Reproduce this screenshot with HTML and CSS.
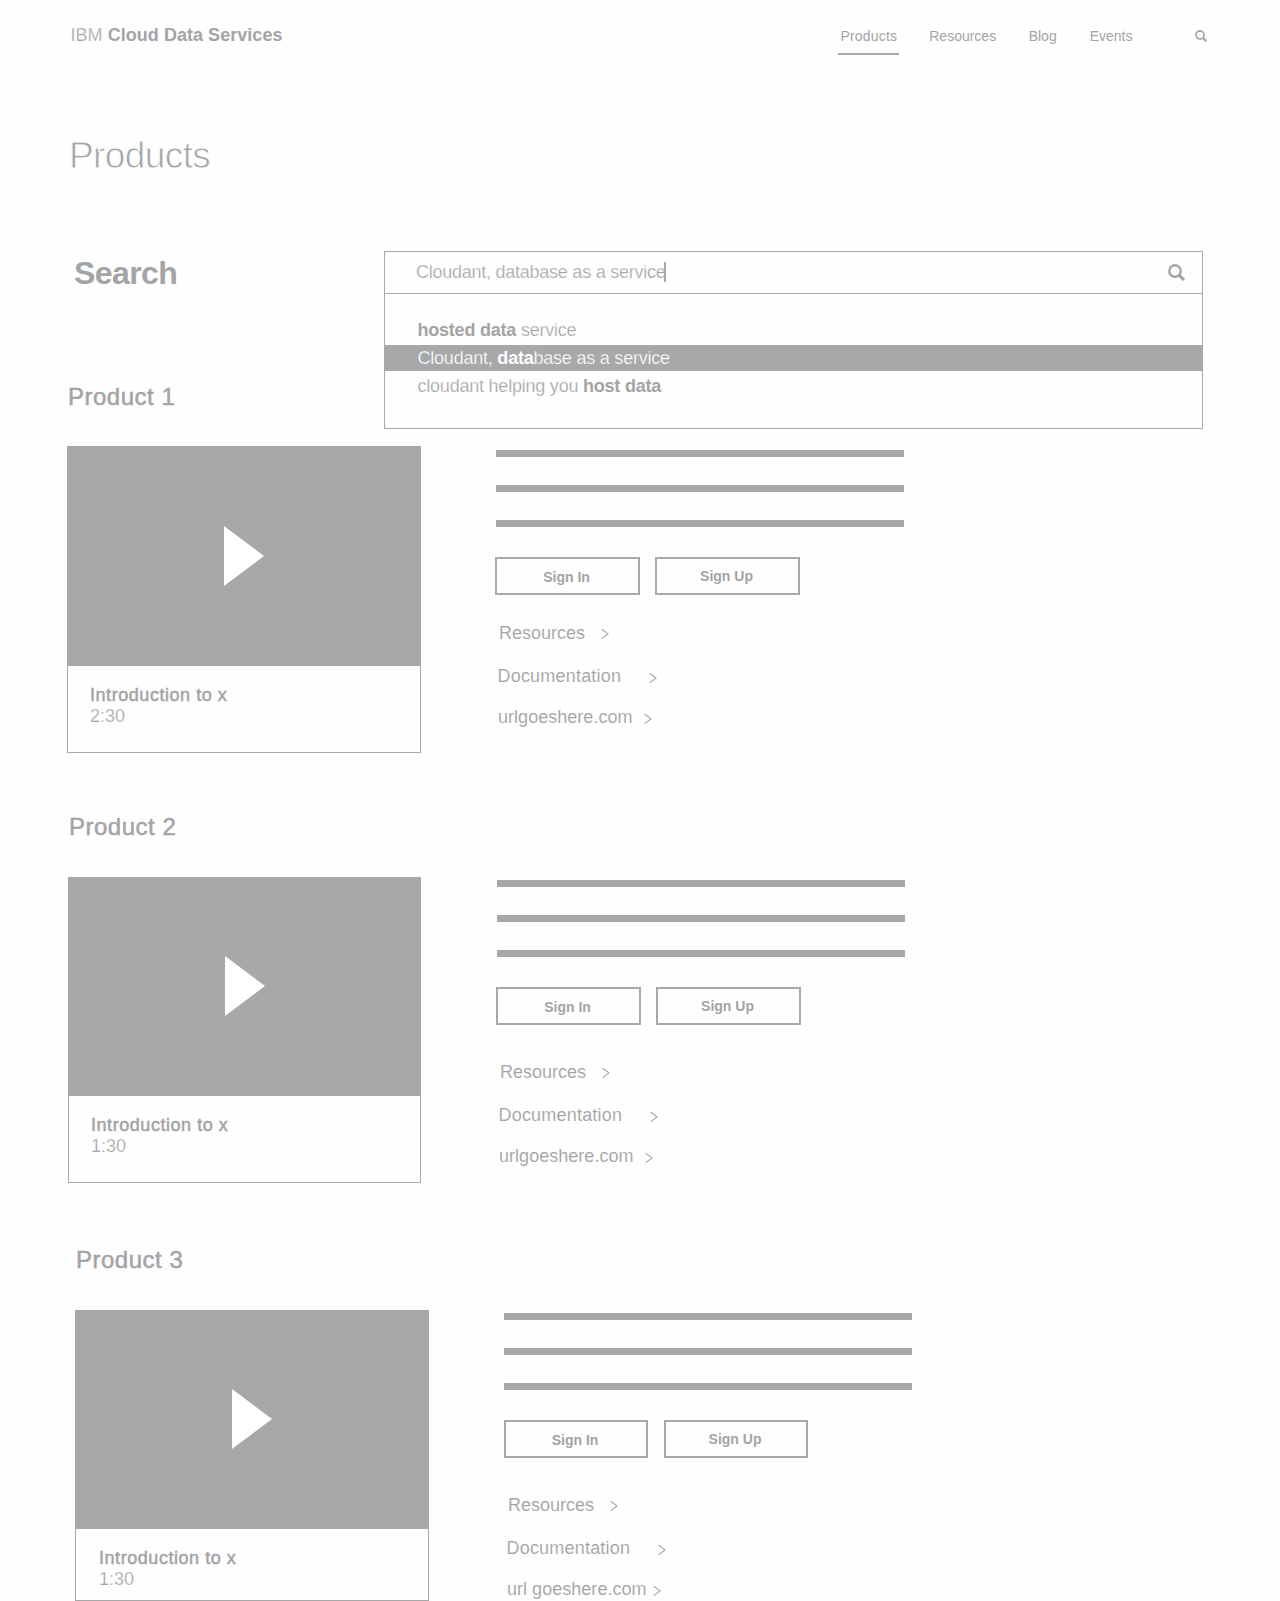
FILE: index.html
```html
<!DOCTYPE html>
<html lang="en">
<head>
<meta charset="utf-8">
<title>IBM Cloud Data Services - Products</title>
<link rel="stylesheet" href="styles.css">
</head>
<body>
<svg class="defs" width="0" height="0">
  <symbol id="search" viewBox="0 0 16 16"><circle cx="6.6" cy="6.6" r="5.4" fill="none" stroke="currentColor" stroke-width="2.2"/><path d="M10.4 10.4L15 15" stroke="currentColor" stroke-width="3" fill="none"/></symbol>
  <symbol id="chevron" viewBox="0 0 8 12"><path d="M.7 1.2L7 5.9L.7 10.6" fill="none" stroke="currentColor" stroke-width="1.1"/></symbol>
  <symbol id="play" viewBox="0 0 40 60"><path d="M0 0L40 30L0 60Z" fill="#fff"/></symbol>
</svg>
<header class="header">
  <div class="brand"><span class="light">IBM</span> <b>Cloud Data Services</b></div>
  <nav class="nav">
    <a class="nav-item active">Products</a>
    <a class="nav-item">Resources</a>
    <a class="nav-item">Blog</a>
    <a class="nav-item">Events</a>
    <svg class="nav-search"><use href="#search"/></svg>
  </nav>
</header>
<h1 class="title">Products</h1>
<section class="search">
  <h2 class="search-title">Search</h2>
  <div class="field">
    <div class="input"><span class="light query">Cloudant, database as a service</span><span class="caret"></span><svg class="field-icon"><use href="#search"/></svg></div>
    <ul class="menu">
      <li><b>hosted data</b> <span class="light">service</span></li>
      <li class="selected"><span class="light">Cloudant, </span><b>data</b><span class="light">base as a service</span></li>
      <li><span class="light">cloudant helping you</span> <b>host data</b></li>
    </ul>
  </div>
</section>
<section class="product first">
  <h2>Product 1</h2>
  <div class="body">
    <article class="card"><div class="video"><svg class="play"><use href="#play"/></svg></div><div class="caption"><h3>Introduction to x</h3><p class="light">2:30</p></div></article>
    <div class="details">
      <div class="lines"><i></i><i></i><i></i></div>
      <div class="buttons"><a class="btn">Sign In</a><a class="btn up">Sign Up</a></div>
      <div class="links">
        <a class="res">Resources<svg><use href="#chevron"/></svg></a>
        <a class="doc">Documentation<svg><use href="#chevron"/></svg></a>
        <a class="url">urlgoeshere.com<svg><use href="#chevron"/></svg></a>
      </div>
    </div>
  </div>
</section>
<section class="product second">
  <h2>Product 2</h2>
  <div class="body">
    <article class="card"><div class="video"><svg class="play"><use href="#play"/></svg></div><div class="caption"><h3>Introduction to x</h3><p class="light">1:30</p></div></article>
    <div class="details">
      <div class="lines"><i></i><i></i><i></i></div>
      <div class="buttons"><a class="btn">Sign In</a><a class="btn up">Sign Up</a></div>
      <div class="links">
        <a class="res">Resources<svg><use href="#chevron"/></svg></a>
        <a class="doc">Documentation<svg><use href="#chevron"/></svg></a>
        <a class="url">urlgoeshere.com<svg><use href="#chevron"/></svg></a>
      </div>
    </div>
  </div>
</section>
<section class="product third">
  <h2>Product 3</h2>
  <div class="body">
    <article class="card"><div class="video"><svg class="play"><use href="#play"/></svg></div><div class="caption"><h3>Introduction to x</h3><p class="light">1:30</p></div></article>
    <div class="details">
      <div class="lines"><i></i><i></i><i></i></div>
      <div class="buttons"><a class="btn">Sign In</a><a class="btn up">Sign Up</a></div>
      <div class="links">
        <a class="res">Resources<svg><use href="#chevron"/></svg></a>
        <a class="doc">Documentation<svg><use href="#chevron"/></svg></a>
        <a class="url">url goeshere.com<svg><use href="#chevron"/></svg></a>
      </div>
    </div>
  </div>
</section>
</body>
</html>
```
FILE: styles.css
```css
:root { --gray: #a7a8aa; --text: #a3a4a5; --page: #fefefe; }
* { box-sizing: border-box; margin: 0; padding: 0; }
body {
  width: 1280px; height: 1601px; overflow: hidden;
  background: var(--page); color: var(--text);
  font-family: "Liberation Sans", Arial, sans-serif; font-size: 18px;
}
ul { list-style: none; }
.defs { position: absolute; }
svg { display: block; flex: none; }
/* thin out the regular weight to a light cut */
.light { -webkit-text-stroke: .25px var(--page); }

.header { display: flex; justify-content: space-between; height: 132px; padding: 23px 73px 0 70.5px; }
.brand { line-height: 24px; letter-spacing: .04px; }
.nav { display: flex; align-items: flex-start; padding-top: 3px; font-size: 14px; line-height: 20px; }
.nav-item { margin-right: 32.5px; }
.active { margin: 0 30px 0 0; padding: 0 2px 7px 2px; border-bottom: 2px solid var(--gray); letter-spacing: .2px; }
.nav-item:nth-child(3) { margin-right: 33px; }
.nav-search { width: 12px; height: 12px; margin: 4px 0 0 30px; }

.title { height: 119px; padding: 2px 0 0 69px; font-size: 37px; font-weight: 400; line-height: 44px; letter-spacing: -.6px; -webkit-text-stroke: .8px var(--page); }

.search { display: flex; height: 131px; padding-left: 74px; }
.search-title { width: 310px; padding-top: 3px; font-size: 32px; line-height: 38px; letter-spacing: -.6px; }
.field { position: relative; width: 819px; }
.input { display: flex; height: 43px; padding-left: 31px; border: 1px solid var(--gray); line-height: 40px; }
.query { letter-spacing: -.25px; }
.caret { width: 2px; height: 20px; margin: 10px 0 0 -1px; background: var(--gray); }
.field-icon { width: 17px; height: 17px; margin: 12px 17px 0 auto; }
.menu {
  position: absolute; left: 0; top: 43px; width: 819px; height: 135px; padding-top: 23px;
  display: flex; flex-direction: column; gap: 2px;
  border: 1px solid var(--gray); border-top: 0; line-height: 26px; letter-spacing: -.22px;
}
.menu li { height: 26px; padding-left: 32.5px; white-space: pre; }
.selected { background: var(--gray); color: #fff; }
.selected .light { -webkit-text-stroke-color: var(--gray); }

.product { height: 431px; padding-left: 67px; }
.second { height: 433px; padding-left: 68px; }
.third { height: 355px; padding-left: 75px; }
.product h2 { height: 64px; padding-left: 1px; font-size: 24px; font-weight: 400; line-height: 28px; letter-spacing: .5px; -webkit-text-stroke: .5px var(--text); }
.first h2 { padding-top: 1px; }
.body { display: flex; }
.card { width: 354px; height: 307px; margin-right: 75px; border: 1px solid var(--gray); }
.second .card { width: 353px; height: 306px; margin-right: 76px; }
.third .card { height: 291px; }
.video { height: 218px; background: var(--gray); padding: 78px 0 0 156px; }
.first .video { height: 219px; padding-top: 79px; }
.play { width: 40px; height: 60px; }
.caption { padding: 19px 0 0 22px; }
.third .caption { padding-left: 23px; }
.caption h3 { font-size: 18px; font-weight: 400; line-height: 21px; letter-spacing: .55px; -webkit-text-stroke: .5px var(--text); }
.caption p { line-height: 21px; }
.details { width: 410px; padding-top: 4px; }
.second .details, .third .details { padding-top: 3px; }
.lines { display: flex; flex-direction: column; gap: 28px; }
.lines i { width: 408px; height: 7px; background: var(--gray); }
.buttons { display: flex; gap: 15px; margin: 30px 0 0 -1px; }
.third .buttons { gap: 16px; margin-left: 0; }
.btn { width: 145px; height: 38px; padding: 6px 2px 0 0; border: 2px solid var(--gray); font-size: 14px; font-weight: 700; line-height: 24px; text-align: center; }
.third .btn { width: 144px; }
.up { padding-top: 5px; }
.links { display: flex; flex-direction: column; margin: 26px 0 0 3px; line-height: 24px; -webkit-text-stroke: .1px var(--page); }
.second .links, .third .links { margin-top: 35px; }
.third .links { margin-left: 4px; }
.links a { display: flex; align-items: flex-start; white-space: pre; }
.links svg { width: 8px; height: 12px; margin: 7px 0 0 16px; }
.res { height: 43px; }
.doc { height: 41px; letter-spacing: .2px; margin-left: -1.5px; }
.links .doc svg { margin: 8px 0 0 28px; }
.url { margin-left: -1px; letter-spacing: .03px; }
.links .url svg { margin: 8px 0 0 11.5px; }
.links .btn { padding: 0; }
.third .links .url svg { margin-left: 6px; }
```
